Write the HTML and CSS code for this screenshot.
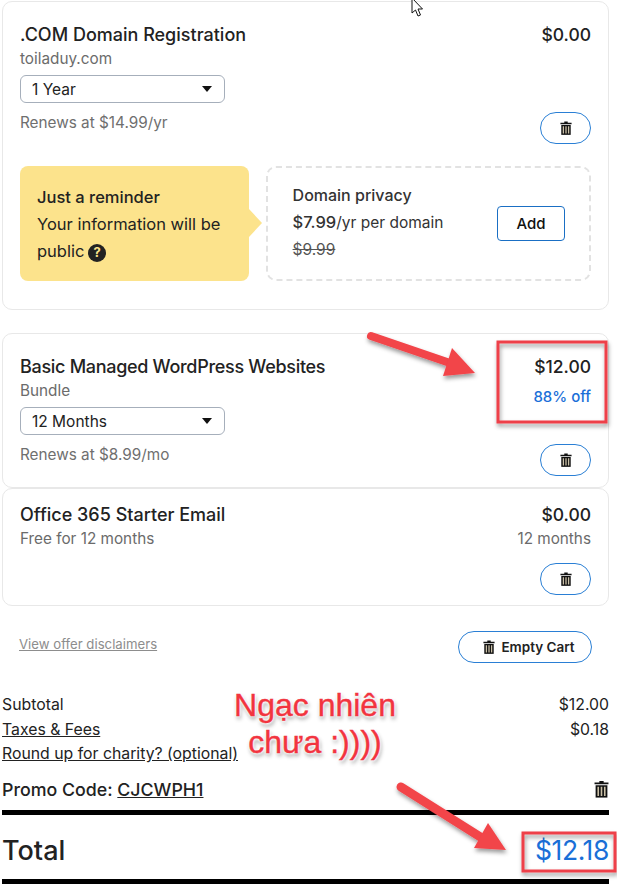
FILE: index.html
```html
<!DOCTYPE html>
<html lang="en">
<head>
  <meta charset="UTF-8">
  <title>Cart</title>
  <link rel="stylesheet" href="styles.css">
</head>
<body>
  <svg width="0" height="0" class="defs">
    <symbol id="trash" viewBox="0 0 14 16">
      <path d="M5 0.5h4v1.5h4.5v1.6h-13v-1.600h4.500z" fill="#111"/>
      <path d="M1.500 4.500h11v11.500h-11z" fill="#111"/>
      <path d="M3.200 6h1.500v8.500h-1.500zM6.250 6h1.500v8.500h-1.500zM9.300 6h1.500v8.500h-1.500z" fill="#c9bfa6"/>
    </symbol>
  </svg>

  <main class="cart">
    <section class="card card-first">
      <div class="row">
        <div class="info">
          <div class="name">.COM Domain Registration</div>
          <div class="sub">toiladuy.com</div>
          <div class="select"><span>1 Year</span><i class="caret"></i></div>
          <div class="renew">Renews at $14.99/yr</div>
        </div>
        <div class="side">
          <div class="price">$0.00</div>
          <button class="pill"><svg class="ico"><use href="#trash"/></svg></button>
        </div>
      </div>
      <div class="upsell">
        <div class="reminder">
          <div class="rem-title">Just a reminder</div>
          <div>Your information will be</div>
          <div>public <span class="help">?</span></div>
        </div>
        <div class="privacy">
          <div class="priv-text">
            <div class="priv-title">Domain privacy</div>
            <div class="priv-price"><b>$7.99</b>/yr per domain</div>
            <div class="priv-old">$9.99</div>
          </div>
          <button class="add">Add</button>
        </div>
      </div>
    </section>

    <section class="card card-second">
      <div class="row">
        <div class="info">
          <div class="name">Basic Managed WordPress Websites</div>
          <div class="sub">Bundle</div>
          <div class="select"><span>12 Months</span><i class="caret"></i></div>
          <div class="renew">Renews at $8.99/mo</div>
        </div>
        <div class="side">
          <div class="price">$12.00</div>
          <div class="off">88% off</div>
          <button class="pill"><svg class="ico"><use href="#trash"/></svg></button>
        </div>
      </div>
    </section>

    <section class="card card-third">
      <div class="row">
        <div class="info">
          <div class="name">Office 365 Starter Email</div>
          <div class="sub">Free for 12 months</div>
        </div>
        <div class="side">
          <div class="price">$0.00</div>
          <div class="sub">12 months</div>
          <button class="pill"><svg class="ico"><use href="#trash"/></svg></button>
        </div>
      </div>
    </section>

    <div class="actions">
      <a class="disclaimers">View offer disclaimers</a>
      <button class="pill pill-wide"><svg class="ico"><use href="#trash"/></svg>Empty Cart</button>
    </div>

    <section class="summary">
      <div class="line"><span>Subtotal</span><span>$12.00</span></div>
      <div class="line"><a>Taxes &amp; Fees</a><span>$0.18</span></div>
      <div class="line"><a>Round up for charity? (optional)</a></div>
      <div class="promo">
        <span>Promo Code: <a>CJCWPH1</a></span>
        <svg class="ico ico-big"><use href="#trash"/></svg>
      </div>
      <div class="total"><span class="total-label">Total</span><span class="total-num">$12.18</span></div>
    </section>
  </main>

  <!-- annotations drawn on top of the screenshot -->
  <svg class="cursor" viewBox="0 0 13 18">
    <path d="M1 -2v15l3.500-3 2.500 6 2.500-1-2.500-6h4.500z" fill="#fff" stroke="#111" stroke-width="1"/>
  </svg>
  <svg class="marks" viewBox="0 0 617 891">
    <defs>
      <filter id="shade" x="-20%" y="-20%" width="140%" height="140%">
        <feDropShadow dx="1" dy="3" stdDeviation="2" flood-color="#000" flood-opacity=".4"/>
      </filter>
    </defs>
    <g filter="url(#shade)">
      <path d="M371 336L450 363" stroke="#f2444a" stroke-width="8" stroke-linecap="round"/>
      <path d="M452 348L443 376L475 373z" fill="#f2444a"/>
    </g>
    <g filter="url(#shade)">
      <path d="M401 787L482 838" stroke="#f2444a" stroke-width="9" stroke-linecap="round"/>
      <path d="M488 823L474 848L506 850z" fill="#f2444a"/>
    </g>
    <g filter="url(#shade)" fill="none" stroke="#ee3f48" stroke-width="3">
      <rect x="498" y="342" width="108" height="80"/>
      <rect x="523" y="833" width="92" height="38"/>
    </g>
  </svg>
  <div class="shout shout-a">Ngạc nhiên</div>
  <div class="shout shout-b">chưa :))))</div>
</body>
</html>
```

FILE: styles.css
```css
* { box-sizing: border-box; }
body { margin: 0; font-family: Inter, "Open Sans", sans-serif; color: #111; background: #fff; font-size: 15px; }
a { color: inherit; text-decoration: underline; }
button { font-family: inherit; background: #fff; cursor: pointer; }
.defs { position: absolute; }

.cart { width: 611px; padding: 1px 2px 0 2px; }

.card {
  border: 1px solid #e8e8e8;
  border-radius: 10px;
  padding: 21px 17px 0;
}
.card-first { height: 309px; }
.card-second { height: 155px; margin-top: 23px; }
.card-third { height: 118px; padding-top: 14px; }

.row { display: flex; justify-content: space-between; }
.info { display: flex; flex-direction: column; }
.side { display: flex; flex-direction: column; align-items: flex-end; }

.name { font-size: 18px; font-weight: 500; line-height: 24px; color: #222; }
.card-second .name { letter-spacing: -.3px; }
.price { font-size: 17.500px; font-weight: 500; line-height: 24px; color: #222; }
.sub { font-size: 15.300px; line-height: 24px; color: #6b6b6b; }
.renew { font-size: 15.300px; line-height: 20px; color: #6f6f6f; margin-top: 10px; }
.off { font-size: 15px; font-weight: 500; line-height: 24px; color: #1a6fd8; margin-top: 6px; }

.select {
  display: flex;
  justify-content: space-between;
  align-items: center;
  width: 205px;
  height: 28px;
  margin-top: 4px;
  padding: 0 12px 0 11px;
  border: 1px solid #a6afbb;
  border-radius: 6px;
  font-size: 15.500px;
  color: #222;
}
.caret { border: 5px solid transparent; border-top: 6px solid #111; border-bottom: 0; }

.pill {
  display: flex;
  justify-content: center;
  align-items: center;
  gap: 6px;
  width: 51px;
  height: 32px;
  padding: 0;
  border: 1.500px solid #2a7fd5;
  border-radius: 16px;
  color: #222;
  font-size: 13.500px;
  font-weight: 600;
}
.card-first .pill { margin-top: 65px; }
.card-second .pill { margin-top: 35px; }
.card-third .pill { margin-top: 12px; }
.ico { width: 12px; height: 14px; }

.upsell { display: flex; align-items: stretch; margin-top: 22px; height: 115px; }
.reminder {
  position: relative;
  width: 229px;
  padding: 18px 17px 0;
  background: #fce38c;
  border-radius: 8px;
  font-size: 16.500px;
  line-height: 27px;
  color: #222;
}
.reminder::after {
  content: "";
  position: absolute;
  right: -13px;
  top: 43px;
  border: 14px solid transparent;
  border-left: 13px solid #fce38c;
  border-right: 0;
}
.rem-title { font-weight: 500; }
.help {
  display: inline-flex;
  justify-content: center;
  align-items: center;
  width: 18px;
  height: 18px;
  margin-left: -1px;
  border-radius: 50%;
  background: #222;
  color: #fce38c;
  font-size: 13px;
  font-weight: 700;
  vertical-align: 0;
}
.privacy {
  display: flex;
  justify-content: space-between;
  align-items: center;
  width: 326px;
  margin-left: 17px;
  padding: 0 24px 0 25px;
  border: 2px dashed #e2e2e2;
  border-radius: 10px;
  font-size: 15.500px;
  line-height: 27px;
  color: #333;
}
.priv-text { padding-bottom: 2px; }
.priv-title { font-size: 16px; font-weight: 500; }
.priv-price b { font-size: 16.500px; font-weight: 500; }
.priv-old { text-decoration: line-through; color: #555; }
.add {
  width: 68px;
  height: 35px;
  border: 1.500px solid #1a6fc4;
  border-radius: 4px;
  font-size: 15px;
  font-weight: 500;
  color: #111;
}

.actions { display: flex; justify-content: space-between; align-items: flex-start; padding: 25px 17px 0; }
.disclaimers { font-size: 13.200px; color: #8d8d8d; margin-top: 5px; }
.pill-wide { width: 134px; padding-left: 8px; }

.summary { margin-top: 30px; font-size: 15.800px; color: #222; }
.line { display: flex; justify-content: space-between; line-height: 24.500px; }
.promo {
  display: flex;
  justify-content: space-between;
  align-items: center;
  height: 44px;
  margin-top: 4px;
  padding-bottom: 2px;
  font-size: 17.800px;
  font-weight: 500;
  border-bottom: 5px solid #000;
}
.ico-big { width: 15px; height: 18px; }
.total {
  display: flex;
  justify-content: space-between;
  align-items: center;
  height: 69px;
  padding-top: 7px;
  border-bottom: 5px solid #000;
}
.total-label { font-size: 27px; font-weight: 500; color: #222; }
.total-num { font-size: 26.500px; letter-spacing: -.4px; color: #1a6fd8; }

.cursor { position: absolute; left: 411px; top: 0; width: 13px; height: 18px; overflow: visible; }
.marks { position: absolute; left: 0; top: 0; width: 617px; height: 891px; pointer-events: none; }
.shout {
  position: absolute;
  left: 215px;
  width: 200px;
  text-align: center;
  font-family: "Liberation Sans", sans-serif;
  font-size: 32px;
  line-height: 36px;
  color: #f2343f;
  -webkit-text-stroke: .4px #f2343f;
  text-shadow: 0 0 3px #fff, 0 0 3px #fff, 0 0 3px #fff, 1px 3px 4px rgba(0,0,0,.45);
}
.shout-a { top: 687px; }
.shout-b { top: 724px; }
```
